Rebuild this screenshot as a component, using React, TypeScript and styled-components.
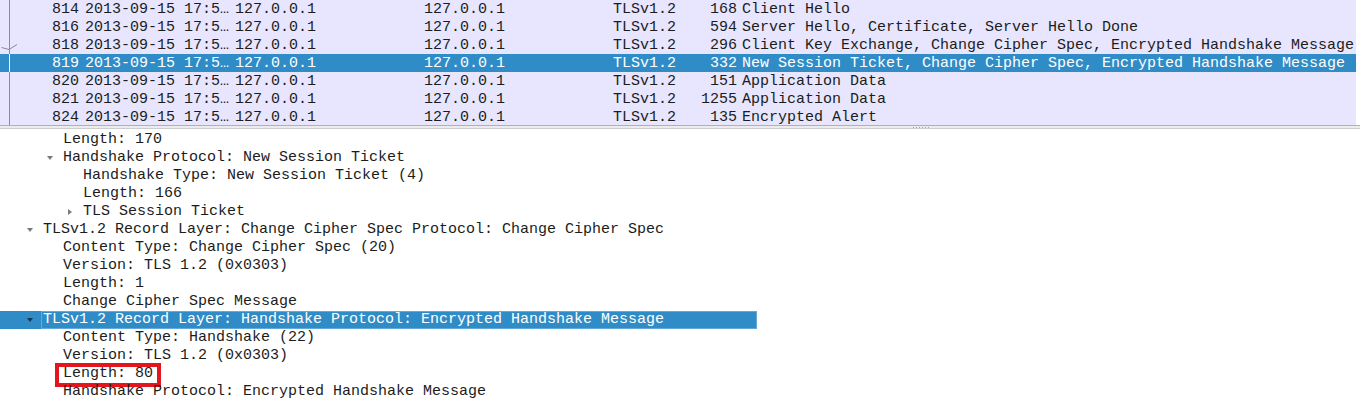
import styled, { createGlobalStyle } from "styled-components";

const GlobalStyle = createGlobalStyle`
  html, body {
    margin: 0;
    padding: 0;
    background: #ffffff;
  }
  body {
    font-family: "Liberation Mono", "DejaVu Sans Mono", monospace;
    font-size: 15px;
    color: #1c1c1c;
    overflow: hidden;
  }
`;

type Packet = {
  no: number;
  length: number;
  info: string;
  related?: boolean;
  selected?: boolean;
};

const packets: Packet[] = [
  { no: 814, length: 168, info: "Client Hello" },
  { no: 816, length: 594, info: "Server Hello, Certificate, Server Hello Done" },
  {
    no: 818,
    length: 296,
    info: "Client Key Exchange, Change Cipher Spec, Encrypted Handshake Message",
    related: true,
  },
  {
    no: 819,
    length: 332,
    info: "New Session Ticket, Change Cipher Spec, Encrypted Handshake Message",
    selected: true,
  },
  { no: 820, length: 151, info: "Application Data" },
  { no: 821, length: 1255, info: "Application Data" },
  { no: 824, length: 135, info: "Encrypted Alert" },
];

type Node = {
  level: number;
  text: string;
  arrow?: "open" | "closed";
  selected?: boolean;
  marked?: boolean;
};

const tree: Node[] = [
  { level: 2, text: "Length: 170" },
  { level: 2, text: "Handshake Protocol: New Session Ticket", arrow: "open" },
  { level: 3, text: "Handshake Type: New Session Ticket (4)" },
  { level: 3, text: "Length: 166" },
  { level: 3, text: "TLS Session Ticket", arrow: "closed" },
  {
    level: 1,
    text: "TLSv1.2 Record Layer: Change Cipher Spec Protocol: Change Cipher Spec",
    arrow: "open",
  },
  { level: 2, text: "Content Type: Change Cipher Spec (20)" },
  { level: 2, text: "Version: TLS 1.2 (0x0303)" },
  { level: 2, text: "Length: 1" },
  { level: 2, text: "Change Cipher Spec Message" },
  {
    level: 1,
    text: "TLSv1.2 Record Layer: Handshake Protocol: Encrypted Handshake Message",
    arrow: "open",
    selected: true,
  },
  { level: 2, text: "Content Type: Handshake (22)" },
  { level: 2, text: "Version: TLS 1.2 (0x0303)" },
  { level: 2, text: "Length: 80", marked: true },
  { level: 2, text: "Handshake Protocol: Encrypted Handshake Message" },
];

function App() {
  return (
    <>
      <GlobalStyle />
      <Window>
        <PacketList>
          {packets.map(p => (
            <PacketRow key={p.no} $selected={p.selected}>
              <Marker $selected={p.selected}>
                {p.related && (
                  <RelatedMark width="18" height="18" viewBox="0 0 18 18">
                    <polyline
                      points="1.5,11.5 9,13.5 17,8.5"
                      fill="none"
                      stroke="#8a8a98"
                      strokeWidth="1"
                    />
                  </RelatedMark>
                )}
              </Marker>
              <NumCell>{p.no}</NumCell>
              <Cell>2013-09-15 17:5…</Cell>
              <Cell>127.0.0.1</Cell>
              <Cell>127.0.0.1</Cell>
              <Cell>TLSv1.2</Cell>
              <NumCell>{p.length}</NumCell>
              <InfoCell>{p.info}</InfoCell>
            </PacketRow>
          ))}
        </PacketList>
        <Splitter>
          <Grip />
        </Splitter>
        <DetailTree>
          <TreeColumn>
            {tree.map((n, i) => (
              <TreeRow key={i} $level={n.level} $selected={n.selected}>
                <ArrowSlot>
                  {n.arrow && <Arrow $dir={n.arrow} $selected={n.selected} />}
                </ArrowSlot>
                <Label $selected={n.selected} $marked={n.marked}>
                  {n.text}
                </Label>
              </TreeRow>
            ))}
          </TreeColumn>
        </DetailTree>
      </Window>
    </>
  );
}

export default App;

const Window = styled.div`
  display: flex;
  flex-direction: column;
  width: 1360px;
  height: 401px;
  overflow: hidden;
`;

const PacketList = styled.div`
  display: flex;
  flex-direction: column;
  height: 125px;
  flex: 0 0 125px;
  overflow: hidden;
  padding-right: 4px;
  background: #ffffff;
`;

const PacketRow = styled.div<{ $selected?: boolean }>`
  display: grid;
  grid-template-columns: 10px 72px 150px 189px 189px 70px 60px 1fr;
  box-sizing: border-box;
  height: 18px;
  flex: 0 0 18px;
  padding-top: 2px;
  line-height: 16px;
  white-space: nowrap;
  background: ${p => (p.$selected ? "#308cc6" : "#e7e6fe")};
  color: ${p => (p.$selected ? "#ffffff" : "#1c1c1c")};
`;

const Marker = styled.div<{ $selected?: boolean }>`
  position: relative;
  margin-top: -2px;
  border-right: 1px solid ${p => (p.$selected ? "#ffffff" : "#8c8b9e")};
`;

const RelatedMark = styled.svg`
  position: absolute;
  left: 0;
  top: 0;
  overflow: visible;
`;

const Cell = styled.div`
  padding-left: 3px;
`;

const NumCell = styled.div`
  padding-right: 3px;
  text-align: right;
`;

const InfoCell = styled.div`
  padding-left: 2px;
`;

const Splitter = styled.div`
  display: flex;
  justify-content: center;
  align-items: center;
  height: 2px;
  flex: 0 0 2px;
  padding-left: 482px;
  background: #ececec;
  border-top: 1px solid #b1b1b1;
  border-bottom: 1px solid #cdcdcd;
`;

const Grip = styled.div`
  width: 17px;
  height: 1px;
  background: repeating-linear-gradient(
    to right,
    #a4a4a4 0 1px,
    transparent 1px 3px
  );
`;

const DetailTree = styled.div`
  flex: 1;
  padding-top: 2px;
  background: #ffffff;
`;

const TreeColumn = styled.div`
  display: flex;
  flex-direction: column;
  width: 757px;
`;

const TreeRow = styled.div<{ $level: number; $selected?: boolean }>`
  display: flex;
  align-items: stretch;
  height: 18px;
  flex: 0 0 18px;
  line-height: 18px;
  white-space: nowrap;
  padding-left: ${p => p.$level * 20 + 23}px;
  background: ${p => (p.$selected ? "#308cc6" : "transparent")};
  color: ${p => (p.$selected ? "#ffffff" : "#1c1c1c")};
`;

const ArrowSlot = styled.div`
  display: flex;
  align-items: center;
  width: 20px;
  margin-left: -20px;
  padding-left: 4px;
  box-sizing: border-box;
`;

const Arrow = styled.span<{ $dir: "open" | "closed"; $selected?: boolean }>`
  display: block;
  width: 0;
  height: 0;
  ${p =>
    p.$dir === "open"
      ? `
    border-left: 3.5px solid transparent;
    border-right: 3.5px solid transparent;
    border-top: 4px solid ${p.$selected ? "#1d3550" : "#7a7a7a"};
  `
      : `
    border-top: 3.5px solid transparent;
    border-bottom: 3.5px solid transparent;
    border-left: 4px solid ${p.$selected ? "#1d3550" : "#7a7a7a"};
    margin-left: 1px;
  `}
`;

const Label = styled.span<{ $selected?: boolean; $marked?: boolean }>`
  position: relative;
  ${p =>
    p.$selected &&
    `
    flex: 1;
    margin-left: -2px;
    padding-left: 1px;
    border: 1px solid #63a9dc;
    line-height: 16px;
  `}

  &::after {
    content: "";
    display: ${p => (p.$marked ? "block" : "none")};
    position: absolute;
    top: -2px;
    bottom: -4px;
    left: -8px;
    right: -8px;
    border: 4px solid #e3151d;
  }
`;
